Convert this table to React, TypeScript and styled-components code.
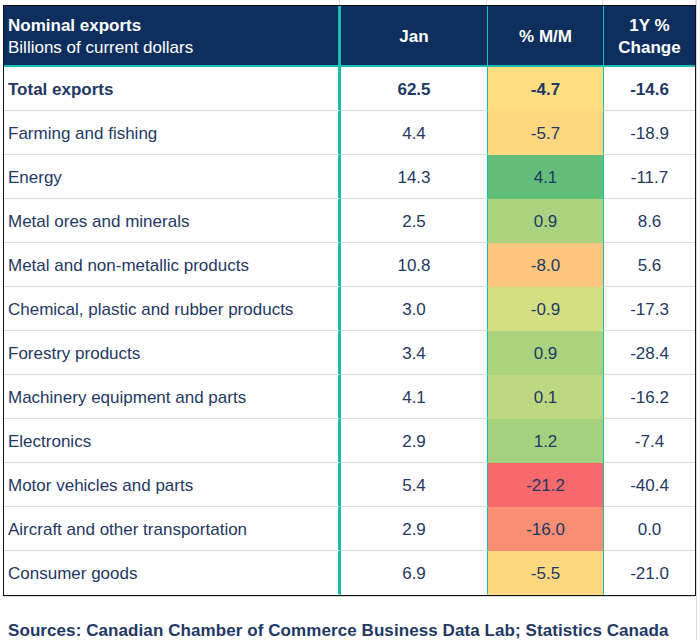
import { FC } from 'react';
import styled, { createGlobalStyle } from 'styled-components';

const GlobalStyle = createGlobalStyle`
    html, body {
        margin: 0;
        padding: 0;
        background: #ffffff;
    }
    body {
        font-family: 'Liberation Sans', Arial, sans-serif;
        color: #1f3864;
    }
`;

type Row = { label: string; jan: string; mm: number; yoy: string; bold?: boolean };

const rows: Row[] = [
    { label: 'Total exports', jan: '62.5', mm: -4.7, yoy: '-14.6', bold: true },
    { label: 'Farming and fishing', jan: '4.4', mm: -5.7, yoy: '-18.9' },
    { label: 'Energy', jan: '14.3', mm: 4.1, yoy: '-11.7' },
    { label: 'Metal ores and minerals', jan: '2.5', mm: 0.9, yoy: '8.6' },
    { label: 'Metal and non-metallic products', jan: '10.8', mm: -8.0, yoy: '5.6' },
    { label: 'Chemical, plastic and rubber products', jan: '3.0', mm: -0.9, yoy: '-17.3' },
    { label: 'Forestry products', jan: '3.4', mm: 0.9, yoy: '-28.4' },
    { label: 'Machinery equipment and parts', jan: '4.1', mm: 0.1, yoy: '-16.2' },
    { label: 'Electronics', jan: '2.9', mm: 1.2, yoy: '-7.4' },
    { label: 'Motor vehicles and parts', jan: '5.4', mm: -21.2, yoy: '-40.4' },
    { label: 'Aircraft and other transportation', jan: '2.9', mm: -16.0, yoy: '0.0' },
    { label: 'Consumer goods', jan: '6.9', mm: -5.5, yoy: '-21.0' },
];

// excel style 3-colour scale: red (min) -> yellow (median) -> green (max)
const RED = [248, 105, 107];
const YELLOW = [255, 235, 132];
const GREEN = [99, 190, 123];

const mix = (a: number[], b: number[], t: number) =>
    `rgb(${a.map((v, i) => Math.round(v + (b[i] - v) * t)).join(',')})`;

const values = rows.map(r => r.mm).sort((a, b) => a - b);
const min = values[0];
const max = values[values.length - 1];
const mid = (values[5] + values[6]) / 2;

const scaleColor = (v: number) =>
    v <= mid ? mix(RED, YELLOW, (v - min) / (mid - min)) : mix(YELLOW, GREEN, (v - mid) / (max - mid));

const TEAL = '#17bdb3';
const GRID = '#dcdcdc';
const COLUMNS = '337px 147px 116px 1fr';

const Sheet = styled.div`
    width: 697px;
    border-right: 1px solid ${GRID};
    box-sizing: border-box;
`;

const TopStrip = styled.div`
    height: 5px;
    margin-left: 3px;
    width: 693px;
    display: grid;
    grid-template-columns: ${COLUMNS};
    & > div {
        border-right: 1px solid ${GRID};
    }
`;

const Table = styled.div`
    margin-left: 3px;
    width: 693px;
    border: 1px solid #111;
    box-sizing: border-box;
`;

const HeaderRow = styled.div`
    display: grid;
    grid-template-columns: ${COLUMNS};
    height: 61px;
    background: #0e2f5e;
    border-bottom: 2px solid ${TEAL};
    box-sizing: border-box;
    color: #ffffff;
    font-weight: bold;
    font-size: 17px;
    line-height: 22px;
`;

const HeadCell = styled.div<{ $align?: 'left' | 'center'; $divider?: 'thick' | 'thin' | 'none' }>`
    display: flex;
    flex-direction: column;
    justify-content: center;
    align-items: ${p => (p.$align === 'left' ? 'flex-start' : 'center')};
    text-align: center;
    padding: 3px 4px 0;
    border-right: ${p =>
        p.$divider === 'thick' ? `3px solid ${TEAL}` : p.$divider === 'thin' ? `1px solid ${TEAL}` : 'none'};
`;

const SubTitle = styled.span`
    font-weight: normal;
`;

const BodyRow = styled.div`
    display: grid;
    grid-template-columns: ${COLUMNS};
    height: 44px;
    font-size: 17px;
`;

const Cell = styled.div<{
    $bold?: boolean;
    $align?: 'left' | 'center';
    $divider?: 'thick' | 'thin' | 'none';
    $filled?: boolean;
    $last?: boolean;
}>`
    display: flex;
    align-items: center;
    justify-content: ${p => (p.$align === 'left' ? 'flex-start' : 'center')};
    padding: 2px 4px 0;
    box-sizing: border-box;
    font-weight: ${p => (p.$bold ? 'bold' : 'normal')};
    border-bottom: 1px solid ${p => (p.$filled || p.$last ? 'transparent' : GRID)};
    border-right: ${p =>
        p.$divider === 'thick' ? `3px solid ${TEAL}` : p.$divider === 'thin' ? `1px solid ${TEAL}` : 'none'};
`;

const Footer = styled.div`
    height: 45px;
    margin-left: 3px;
    border-top: 1px solid ${GRID};
    display: flex;
    align-items: flex-end;
    padding: 0 0 0 5px;
    box-sizing: border-box;
    font-weight: bold;
    font-size: 17px;
    letter-spacing: 0.08px;
    color: #1f3864;
`;

const App: FC = () => (
    <>
        <GlobalStyle />
        <Sheet>
            <TopStrip>
                <div />
                <div />
                <div />
                <div />
            </TopStrip>
            <Table>
                <HeaderRow>
                    <HeadCell $align="left" $divider="thick">
                        <span>Nominal exports</span>
                        <SubTitle>Billions of current dollars</SubTitle>
                    </HeadCell>
                    <HeadCell $divider="thin">Jan</HeadCell>
                    <HeadCell $divider="thin">% M/M</HeadCell>
                    <HeadCell>
                        <span>1Y %</span>
                        <span>Change</span>
                    </HeadCell>
                </HeaderRow>
                {rows.map((r, i) => {
                    const last = i === rows.length - 1;
                    return (
                        <BodyRow key={r.label}>
                            <Cell $align="left" $bold={r.bold} $divider="thick" $last={last}>
                                {r.label}
                            </Cell>
                            <Cell $bold={r.bold} $divider="thin" $last={last}>
                                {r.jan}
                            </Cell>
                            <Cell
                                $bold={r.bold}
                                $divider="thin"
                                $filled
                                style={{ background: scaleColor(r.mm) }}
                            >
                                {r.mm.toFixed(1)}
                            </Cell>
                            <Cell $bold={r.bold} $last={last}>
                                {r.yoy}
                            </Cell>
                        </BodyRow>
                    );
                })}
            </Table>
            <Footer>Sources: Canadian Chamber of Commerce Business Data Lab; Statistics Canada</Footer>
        </Sheet>
    </>
);

export default App;
